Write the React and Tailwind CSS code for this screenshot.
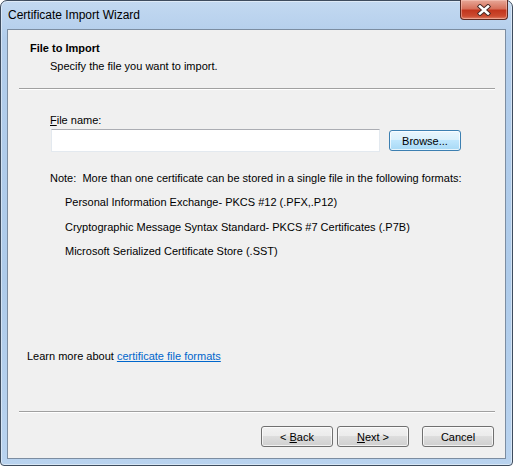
import React from 'react';

// Win7 Aero style wizard dialog
const FONT = { fontFamily: '"Liberation Sans", Arial, sans-serif' };

function WinButton({ children, primary = false, className = '' }) {
    return (
        <div
            className={`h-[21px] w-[72px] rounded-[3px] border ${
                primary ? 'border-[#3c7fb1]' : 'border-[#707070]'
            } shadow-[inset_0_0_0_1px_rgba(255,255,255,0.7)] ${
                primary
                    ? 'bg-[linear-gradient(180deg,#eaf6fd_0%,#d9f0fc_49%,#bee6fd_50%,#a7d9f5_100%)]'
                    : 'bg-[linear-gradient(180deg,#f2f2f2_0%,#ebebeb_49%,#dddddd_50%,#cfcfcf_100%)]'
            } flex items-center justify-center text-[11px] leading-[16px] text-black ${className}`}
        >
            {children}
        </div>
    );
}

function CloseButton() {
    return (
        <div className="absolute top-[-1px] right-[4px] h-[20px] w-[48px] rounded-b-[4px] border border-t-0 border-[#5e2a22] bg-[linear-gradient(180deg,#e7a898_0%,#d7715c_45%,#c2361e_55%,#cc4b30_85%,#e0826a_100%)] shadow-[inset_0_0_0_1px_rgba(255,210,200,0.45)] flex items-center justify-center">
            <svg width="14" height="12" viewBox="0 0 14 12">
                <path d="M3 2.5 L11 9.5 M11 2.5 L3 9.5" stroke="#4a2a26" strokeWidth="4.5" strokeLinecap="square" />
                <path d="M3 2.5 L11 9.5 M11 2.5 L3 9.5" stroke="#ffffff" strokeWidth="2.6" strokeLinecap="square" />
            </svg>
        </div>
    );
}

export default function App() {
    return (
        <div className="w-[513px] h-[466px] bg-white" style={FONT}>
            <div className="relative w-[513px] h-[466px] rounded-t-[7px] rounded-b-[4px] border border-[#3e4c5e] bg-[linear-gradient(180deg,#c3d9f1_0%,#b2cdeb_8%,#aecbea_60%,#b9d3ef_100%)] shadow-[inset_0_0_0_1px_rgba(255,255,255,0.45)] flex flex-col">
                {/* ── Title bar ── */}
                <div className="h-[28px] shrink-0 pl-[7px] pt-[6px] text-[12px] leading-[16px] text-black">
                    Certificate Import Wizard
                </div>
                <CloseButton />

                {/* ── Client area ── */}
                <div className="mx-[6px] h-[430px] border border-[#7c8da1] bg-[#f0f0f0] flex flex-col text-[11px] leading-[16px] text-black">
                    {/* Header */}
                    <div className="pt-[10px] pl-[22px] font-bold">File to Import</div>
                    <div className="pl-[42px] mt-[2px]">Specify the file you want to import.</div>
                    <div className="mt-[14px] ml-[11px] mr-[10px] h-[2px] border-t border-[#a0a0a0] border-b border-b-white" />

                    {/* Body */}
                    <div className="mt-[22px] pl-[42px]">
                        <span className="underline underline-offset-[1px]">F</span>ile name:
                    </div>
                    <div className="mt-[1px] ml-[43px] flex items-center gap-[9px]">
                        <div className="h-[23px] w-[329px] bg-white border border-[#e3e9ef] border-t-[#abadb3]" />
                        <WinButton primary>Browse...</WinButton>
                    </div>

                    <div className="mt-[18px] pl-[42px]">
                        Note:&nbsp; More than one certificate can be stored in a single file in the following formats:
                    </div>
                    <div className="mt-[8px] pl-[57px]">Personal Information Exchange- PKCS #12 (.PFX,.P12)</div>
                    <div className="mt-[9px] pl-[57px]">Cryptographic Message Syntax Standard- PKCS #7 Certificates (.P7B)</div>
                    <div className="mt-[8px] pl-[57px]">Microsoft Serialized Certificate Store (.SST)</div>

                    <div className="flex-1" />

                    <div className="pl-[19px]">
                        Learn more about{' '}
                        <span className="text-[#0066cc] underline underline-offset-[1px]">certificate file formats</span>
                    </div>

                    {/* Footer */}
                    <div className="mt-[47px] ml-[11px] mr-[10px] h-[2px] border-t border-[#a0a0a0] border-b border-b-white" />
                    <div className="mt-[13px] mb-[11px] flex justify-end pr-[11px]">
                        <WinButton>
                            &lt;&nbsp;<span className="underline underline-offset-[1px]">B</span>ack
                        </WinButton>
                        <WinButton className="ml-[4px]">
                            <span className="underline underline-offset-[1px]">N</span>ext &gt;
                        </WinButton>
                        <WinButton className="ml-[13px]">Cancel</WinButton>
                    </div>
                </div>
            </div>
        </div>
    );
}
